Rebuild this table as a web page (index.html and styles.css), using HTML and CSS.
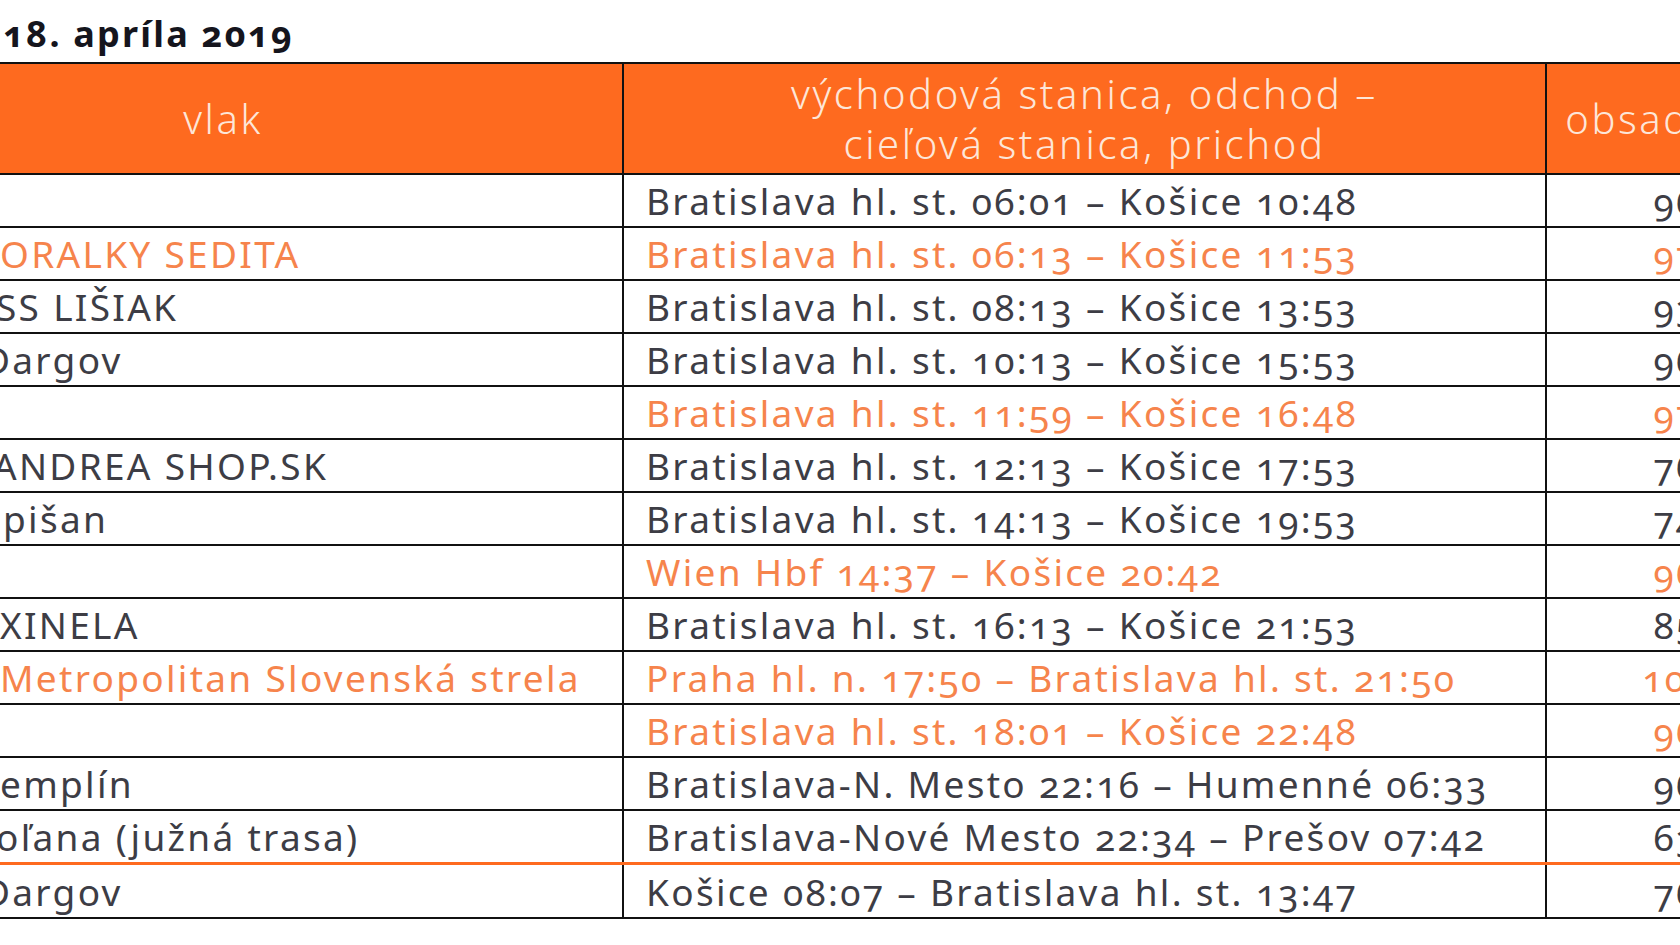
FILE: index.html
```html
<!DOCTYPE html>
<html lang="sk">
<head>
<meta charset="utf-8">
<title>18. apríla 2019</title>
<link rel="stylesheet" href="styles.css">
</head>
<body>
<h1 class="title">18. apríla 2019</h1>
<table class="schedule">
  <colgroup>
    <col class="col-train">
    <col class="col-route">
    <col class="col-load">
  </colgroup>
  <thead>
    <tr>
      <th>vlak</th>
      <th>východová stanica, odchod –<br>cieľová stanica, prichod</th>
      <th class="th-load">obsadenosť</th>
    </tr>
  </thead>
  <tbody>
    <tr><td></td><td>Bratislava hl. st. 06:01 – Košice 10:48</td><td>96</td></tr>
    <tr class="hl"><td>ORALKY SEDITA</td><td>Bratislava hl. st. 06:13 – Košice 11:53</td><td>97</td></tr>
    <tr><td class="cut-s">SS LIŠIAK</td><td>Bratislava hl. st. 08:13 – Košice 13:53</td><td>93</td></tr>
    <tr><td class="cut-l">Dargov</td><td>Bratislava hl. st. 10:13 – Košice 15:53</td><td>96</td></tr>
    <tr class="hl"><td></td><td>Bratislava hl. st. 11:59 – Košice 16:48</td><td>97</td></tr>
    <tr><td class="cut-m">ANDREA SHOP.SK</td><td>Bratislava hl. st. 12:13 – Košice 17:53</td><td>76</td></tr>
    <tr><td class="cut-in">pišan</td><td>Bratislava hl. st. 14:13 – Košice 19:53</td><td>74</td></tr>
    <tr class="hl"><td></td><td>Wien Hbf 14:37 – Košice 20:42</td><td>96</td></tr>
    <tr><td>XINELA</td><td>Bratislava hl. st. 16:13 – Košice 21:53</td><td>85</td></tr>
    <tr class="hl"><td>Metropolitan Slovenská strela</td><td>Praha hl. n. 17:50 – Bratislava hl. st. 21:50</td><td>102</td></tr>
    <tr class="hl"><td></td><td>Bratislava hl. st. 18:01 – Košice 22:48</td><td>96</td></tr>
    <tr><td>emplín</td><td>Bratislava-N. Mesto 22:16 – Humenné 06:33</td><td>96</td></tr>
    <tr><td class="cut-s">oľana (južná trasa)</td><td>Bratislava-Nové Mesto 22:34 – Prešov 07:42</td><td>63</td></tr>
    <tr class="split"><td class="cut-l">Dargov</td><td>Košice 08:07 – Bratislava hl. st. 13:47</td><td>76</td></tr>
  </tbody>
</table>
</body>
</html>
```

FILE: styles.css
```css
html, body {
  margin: 0;
  padding: 0;
  background: #ffffff;
}

body {
  width: 1680px;
  height: 945px;
  overflow: hidden;
  font-family: "Noto Sans", "Open Sans", "DejaVu Sans", sans-serif;
}

.title {
  margin: 0 0 9px 0;
  padding: 15px 0 0 3px;
  font-size: 36px;
  line-height: 38px;
  font-weight: 700;
  color: #15151d;
  letter-spacing: 2.2px;
  font-variant-numeric: oldstyle-nums;
}

.schedule {
  border-collapse: collapse;
  table-layout: fixed;
  width: 1983px;
  margin-left: -178px;
  font-size: 37px;
  color: #3d3d45;
  font-variant-numeric: oldstyle-nums;
  letter-spacing: 2.3px;
}

.col-train { width: 800px; }
.col-route { width: 923px; }
.col-load { width: 260px; }

.schedule th,
.schedule td {
  border: 2px solid #111111;
  padding: 0 0 0 22px;
  white-space: nowrap;
  overflow: hidden;
}

.schedule th {
  height: 109px;
  padding: 0;
  background: #fe6a1f;
  color: #fde6d8;
  font-size: 40px;
  font-weight: 300;
  letter-spacing: 2.6px;
  line-height: 50px;
  text-align: center;
  vertical-align: middle;
}

.schedule th.th-load {
  padding-left: 18px;
}

.schedule td {
  height: 51px;
  line-height: 51px;
  text-align: left;
  vertical-align: middle;
}

.schedule td:first-child {
  padding-left: 176px;
}

.schedule td:last-child {
  padding: 0;
  text-align: center;
}

.schedule tr.hl td {
  color: #f6844c;
}

.schedule tr.split td {
  height: 52px;
  border-top: 3px solid #fe6a1f;
}

.schedule td.cut-s { padding-left: 172px; }
.schedule td.cut-m { padding-left: 169px; }
.schedule td.cut-l { padding-left: 159px; }
.schedule td.cut-in { padding-left: 179px; }
```
